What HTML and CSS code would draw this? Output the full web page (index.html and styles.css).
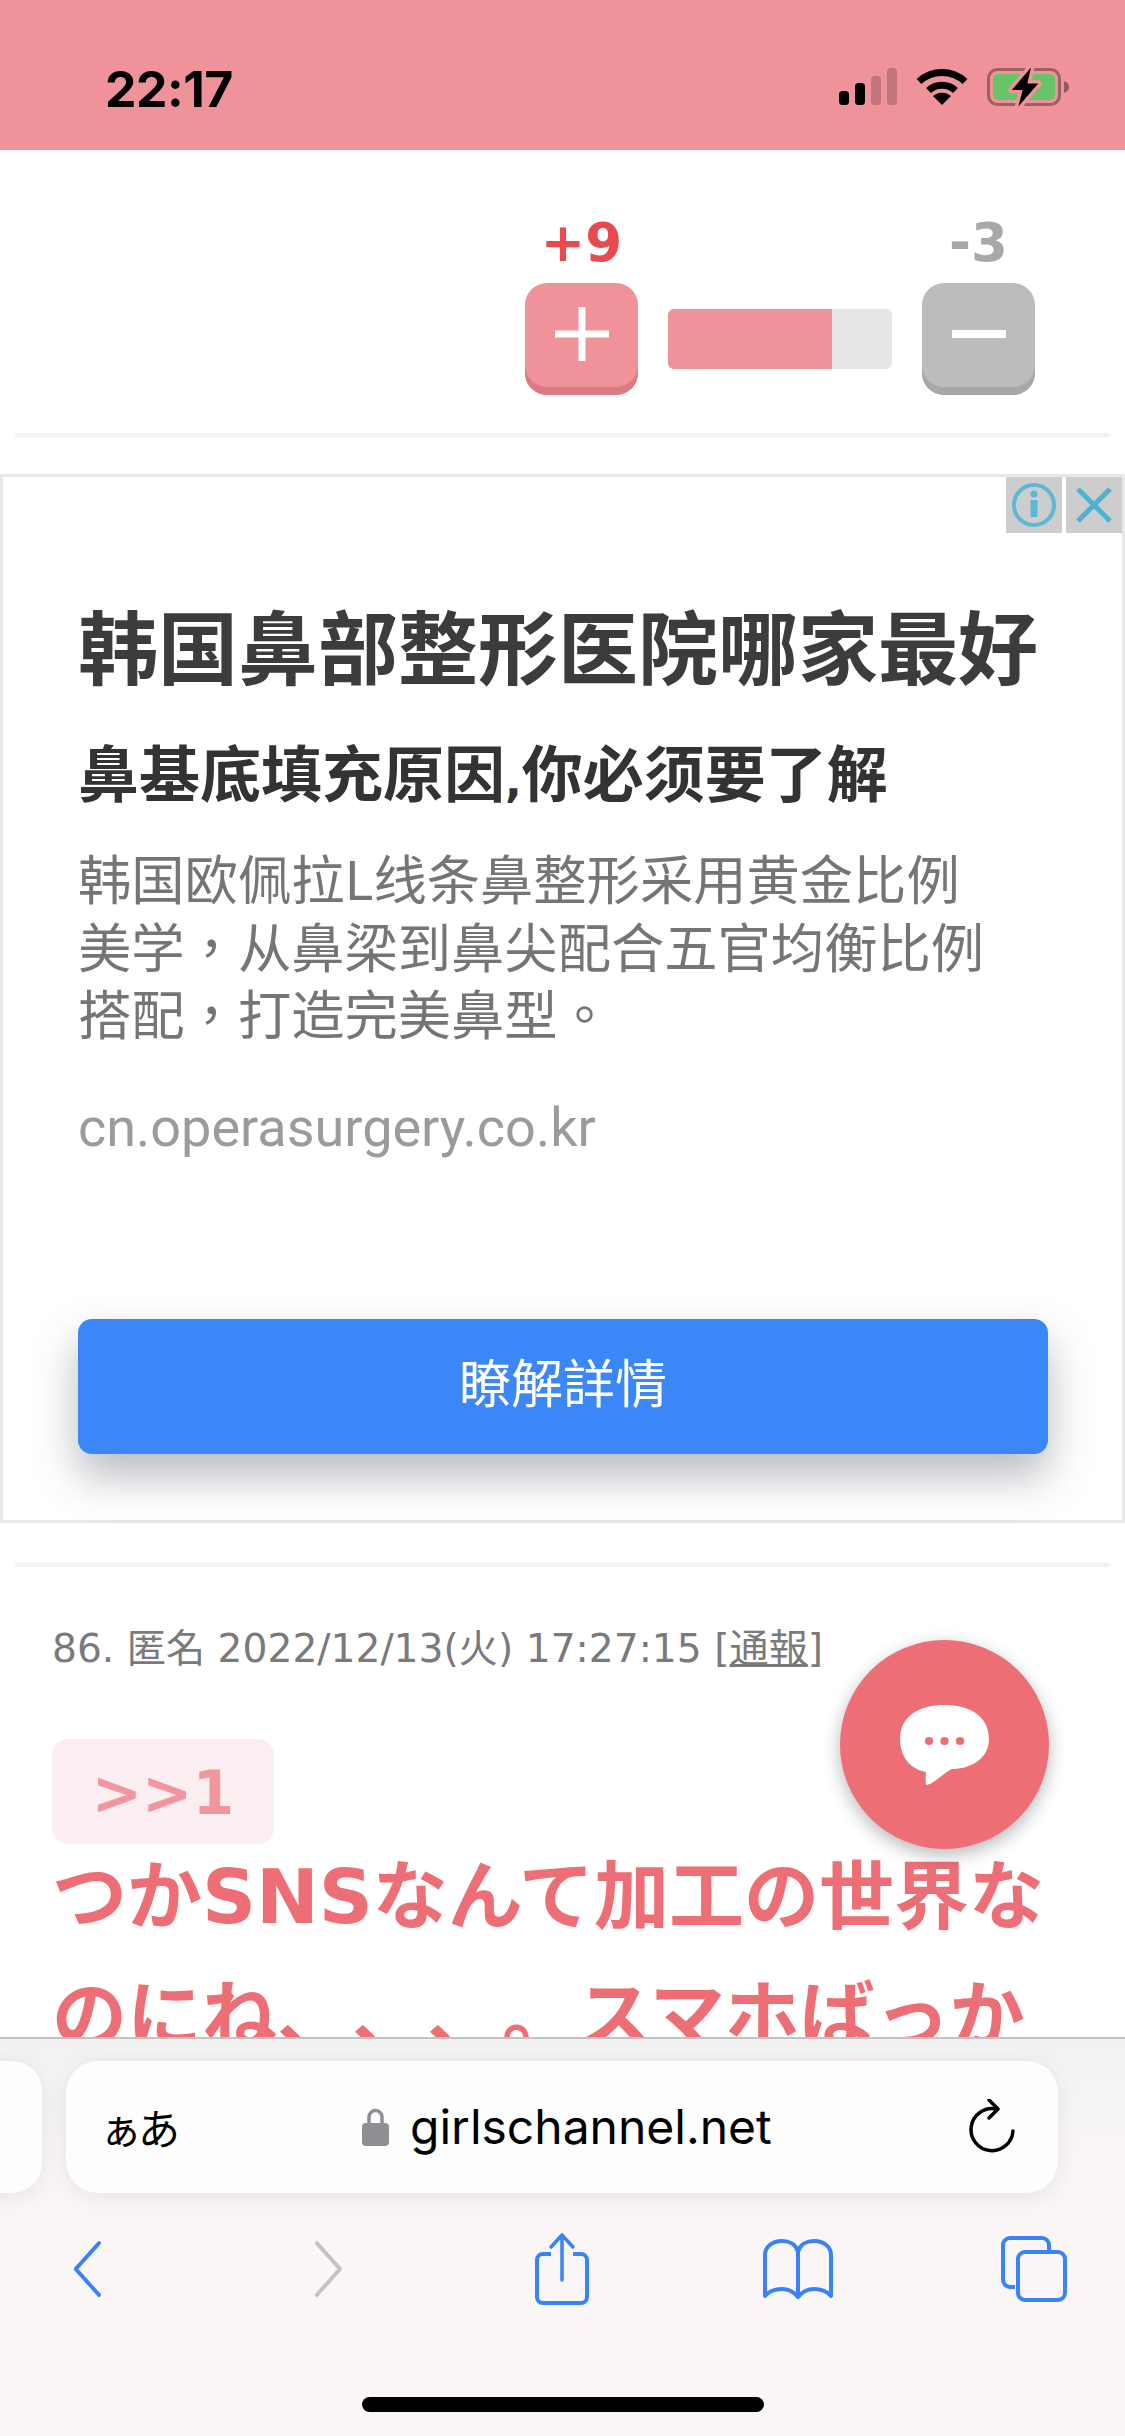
FILE: index.html
```html
<!DOCTYPE html>
<html lang="ja">
<head>
<meta charset="utf-8">
<title>girlschannel.net</title>
<link rel="stylesheet" href="styles.css">
</head>
<body>
<div class="screen">
  <header class="status">
    <span class="time">22:17</span>
    <div class="status-icons">
      <svg class="ico-signal" viewBox="0 0 58 37" width="58" height="37"><rect x="0" y="23" width="10" height="14" rx="3.5"/><rect x="16" y="15" width="10" height="22" rx="3.5"/><rect x="32" y="8" width="10" height="29" rx="3.5" opacity=".2"/><rect x="48" y="0" width="10" height="37" rx="3.5" opacity=".2"/></svg>
      <svg class="ico-wifi" viewBox="0 0 52 38" width="52" height="38"><path d="M3 13.5C16 1.5 36 1.5 49 13.5" fill="none" stroke="#000" stroke-width="7"/><path d="M12.500 22.500C20 15.500 32 15.500 39.500 22.500" fill="none" stroke="#000" stroke-width="7"/><path d="M17 28C22 23.500 30 23.500 35 28L26 37Z"/></svg>
      <svg class="ico-batt" viewBox="0 0 84 42" width="84" height="42"><rect x="1.500" y="3.500" width="71" height="35" rx="9" fill="none" stroke="#000" stroke-opacity=".35" stroke-width="3"/><path d="M77 15C80 16 82 18 82 21C82 24 80 26 77 27Z" fill="#000" fill-opacity=".4"/><rect x="6" y="8" width="62" height="26" rx="5" fill="#65c466"/><path d="M44 1.500L24.700 24H35.700L31.300 40.500L51.300 17.500H40.300Z" fill="#000" stroke="#f0929a" stroke-width="7" paint-order="stroke" stroke-linejoin="round"/></svg>
    </div>
  </header>

  <main class="page">
    <section class="vote">
      <div class="vote-col">
        <span class="count count-plus">+9</span>
        <button class="vbtn vbtn-plus" type="button"><svg viewBox="0 0 54 54" width="54" height="54"><path d="M27 0V54M0 27H54" stroke="#fff" stroke-width="7"/></svg></button>
      </div>
      <div class="meter"><div class="meter-fill"></div></div>
      <div class="vote-col">
        <span class="count count-minus">-3</span>
        <button class="vbtn vbtn-minus" type="button"><svg viewBox="0 0 54 54" width="54" height="54"><path d="M0 27H54" stroke="#fff" stroke-width="8"/></svg></button>
      </div>
    </section>
    <hr class="rule">

    <aside class="ad">
      <div class="ad-controls">
        <span class="ad-ctl"><svg viewBox="0 0 56 56" width="56" height="56"><circle cx="28" cy="28" r="20" fill="none" stroke="#5cb8d6" stroke-width="4"/><circle cx="28" cy="17" r="3.500" fill="#5cb8d6"/><rect x="24.500" y="23" width="7" height="17" fill="#5cb8d6"/></svg></span>
        <span class="ad-ctl"><svg viewBox="0 0 56 56" width="56" height="56"><path d="M12 12L44 44M44 12L12 44" stroke="#4db2d4" stroke-width="5"/></svg></span>
      </div>
      <h2 class="ad-title" lang="zh-Hans">韩国鼻部整形医院哪家最好</h2>
      <h3 class="ad-sub" lang="zh-Hans">鼻基底填充原因<span class="latin-comma">,</span>你必须要了解</h3>
      <p class="ad-desc" lang="zh-Hans">韩国欧佩拉L线条鼻整形采用黄金比例<br>美学<span class="punct" lang="zh-Hant">，</span>从鼻梁到鼻尖配合五官均衡比例<br>搭配<span class="punct" lang="zh-Hant">，</span>打造完美鼻型<span class="punct" lang="zh-Hant">。</span></p>
      <p class="ad-url">cn.operasurgery.co.kr</p>
      <a class="ad-btn" lang="zh-Hant">瞭解詳情</a>
    </aside>
    <hr class="rule rule-2">

    <article class="comment">
      <p class="meta">86. 匿名 2022/12/13(火) 17:27:15 [<u>通報</u>]</p>
      <span class="anchor">&gt;&gt;1</span>
      <p class="body-text">つかSNSなんて加工の世界なのにね、、、。スマホばっか</p>
    </article>
  </main>

  <button class="fab" type="button">
    <svg viewBox="0 0 90 84" width="93" height="84" preserveAspectRatio="none"><path d="M45 2C68 2 88 12 88 36C88 56 70 66 52 66C44 70 36 80 28 82C26 82 27 76 27 69C12 66 2 54 2 36C2 12 22 2 45 2Z" fill="#fff"/><circle cx="30" cy="38" r="4" fill="#ee6e75"/><circle cx="45" cy="38" r="4" fill="#ee6e75"/><circle cx="60" cy="38" r="4" fill="#ee6e75"/></svg>
  </button>

  <footer class="browser">
    <div class="url-row">
      <div class="tab-stub"></div>
      <div class="url-bar">
        <span class="aa">ぁあ</span>
        <div class="url-mid">
          <svg viewBox="0 0 27 38" width="27" height="38"><path d="M7 16V9a6.500 6.500 0 0 1 13 0V16" fill="none" stroke="#8e8e93" stroke-width="3.500"/><rect x="0" y="15" width="27" height="23" rx="4" fill="#8e8e93"/></svg>
          <span class="domain">girlschannel.net</span>
        </div>
        <svg class="reload" viewBox="0 0 46 56" width="46" height="56"><path d="M27 10A21 21 0 1 0 44 32" fill="none" stroke="#000" stroke-width="3.500" stroke-linecap="round"/><path d="M20 1L29 10L20 19" fill="none" stroke="#000" stroke-width="3.500" stroke-linecap="round" stroke-linejoin="round"/></svg>
      </div>
    </div>
    <nav class="tools">
      <svg viewBox="0 0 32 58" width="32" height="58"><path d="M29 3L3 29L29 55" transform="matrix(.9 0 0 1 3 0)" fill="none" stroke="#3a82f7" stroke-width="4" stroke-linecap="round" stroke-linejoin="round"/></svg>
      <svg viewBox="0 0 32 58" width="32" height="58"><path d="M3 3L29 29L3 55" transform="matrix(.9 0 0 1 0 0)" fill="none" stroke="#c4c2c3" stroke-width="4" stroke-linecap="round" stroke-linejoin="round"/></svg>
      <svg viewBox="0 0 56 74" width="56" height="74"><path d="M17 22H9a6 6 0 0 0-6 6V65a6 6 0 0 0 6 6H47a6 6 0 0 0 6-6V28a6 6 0 0 0-6-6H39" fill="none" stroke="#3a82f7" stroke-width="4"/><path d="M28 48V4M17 15L28 3L39 15" fill="none" stroke="#3a82f7" stroke-width="3.500" stroke-linecap="round"/></svg>
      <svg viewBox="0 0 72 60" width="72" height="60"><path d="M36 13C34 5 27 2 20 2C10 2 3 8 3 16V57C8 51 14 50 20 50C27 50 32 53 36 58C40 53 45 50 52 50C58 50 64 51 69 57V16C69 8 62 2 52 2C45 2 38 5 36 13ZM36 13V58" fill="none" stroke="#3a82f7" stroke-width="4" stroke-linejoin="round"/></svg>
      <svg viewBox="0 0 68 68" width="68" height="68"><path d="M15 52H10a7 7 0 0 1-7-7V10a7 7 0 0 1 7-7H42a7 7 0 0 1 7 7V16" fill="none" stroke="#3a82f7" stroke-width="4"/><rect x="18" y="17" width="47" height="48" rx="7" fill="none" stroke="#3a82f7" stroke-width="4"/></svg>
    </nav>
    <div class="home-bar"></div>
  </footer>
</div>
</body>
</html>
```
FILE: styles.css
```css
* { box-sizing: border-box; }
html, body { margin: 0; padding: 0; background: #fff; }
.screen {
  position: relative;
  width: 1125px;
  height: 2436px;
  overflow: hidden;
  font-family: "Noto Sans CJK JP", "Noto Sans", sans-serif;
  text-spacing-trim: space-all;
}
/* status bar */
.status {
  height: 150px;
  background: #f0929a;
  display: flex;
  justify-content: space-between;
  align-items: flex-start;
  padding: 59px 54px 0 105px;
}
.time {
  font: 700 50px/60px "Inter", "Liberation Sans", sans-serif;
  color: #000;
  letter-spacing: -0.5px;
}
.status-icons { display: flex; align-items: flex-start; gap: 19px; padding-top: 9px; }
.ico-batt { margin-top: -2px; }
/* vote */
.vote {
  display: flex;
  justify-content: flex-end;
  align-items: flex-end;
  gap: 30px;
  padding: 64px 90px 0 0;
}
.vote-col { display: flex; flex-direction: column; align-items: center; }
.count { font: 700 53px/57px "DejaVu Sans", sans-serif; margin-bottom: 12px; }
.count-plus { color: #ea4a4f; }
.count-minus { color: #a8a8a8; }
.vbtn {
  width: 113px;
  height: 112px;
  border: 0;
  border-radius: 22px;
  padding: 0 0 10px;
  display: flex;
  align-items: center;
  justify-content: center;
}
.vbtn-plus { background: #f0929a; box-shadow: inset 0 -8px 0 #db7a82; }
.vbtn-minus { background: #bcbcbc; box-shadow: inset 0 -8px 0 #a8a8a8; }
.meter {
  width: 224px;
  height: 60px;
  margin-bottom: 26px;
  background: #e6e6e6;
  border-radius: 6px;
  overflow: hidden;
}
.meter-fill { width: 73%; height: 100%; background: #f0929a; }
.rule {
  height: 4px;
  border: 0;
  margin: 38px 15px 0;
  background: #f2f2f2;
}
/* ad */
.ad {
  position: relative;
  height: 1049px;
  margin-top: 37px;
  border: 3px solid #e8e8e8;
  padding: 121px 0 66px 75px;
  display: flex;
  flex-direction: column;
}
.ad-controls { position: absolute; top: 0; right: 0; display: flex; gap: 4px; }
.ad-ctl { width: 56px; height: 56px; background: #cdcdcd; display: block; }
.ad-ctl svg { display: block; }
.ad-title {
  margin: 0;
  font: 700 80px/90px "Noto Sans CJK SC", sans-serif;
  color: #3c3c3c;
  white-space: nowrap;
}
.ad-sub {
  margin: 47px 0 0;
  font: 700 61px/72px "Noto Sans CJK SC", sans-serif;
  color: #333;
  white-space: nowrap;
}
.latin-comma { font-family: "DejaVu Sans", sans-serif; font-size: 44px; line-height: 1; }
.ad-desc {
  margin: 36px 0 0;
  font: 400 53.300px/67.500px "Noto Sans CJK SC", sans-serif;
  color: #757575;
}
.punct { font-family: "Noto Sans CJK TC", sans-serif; }
.ad-url {
  margin: 52px 0 0;
  font: 400 54px/60px "Roboto", sans-serif;
  color: #9b9b9b;
}
.ad-btn {
  display: block;
  flex: none;
  margin-top: auto;
  width: 970px;
  height: 135px;
  border-radius: 14px;
  background: #3b87f7;
  color: #fff;
  font: 400 52px/124px "Noto Sans CJK TC", sans-serif;
  text-align: center;
  box-shadow: 0 22px 44px rgba(60, 64, 80, .36);
}
.rule-2 { margin-top: 40px; }
/* comment */
.comment { padding: 55px 15px 0 52px; }
.meta {
  margin: 0;
  font: 400 39.200px/54px "DejaVu Sans", "Noto Sans CJK JP", sans-serif;
  color: #7a7a7a;
  white-space: nowrap;
}
.meta u { text-decoration: underline; }
.anchor {
  display: block;
  width: 222px;
  height: 105px;
  margin-top: 63px;
  border-radius: 16px;
  background: #fbeef0;
  color: #f2959c;
  font: 700 60px/108px "DejaVu Sans", sans-serif;
  text-align: center;
}
.body-text {
  margin: -7px 0 0;
  width: 1010px;
  font: 700 75px/120px "DejaVu Sans", "Noto Sans CJK JP", sans-serif;
  color: #ee6e75;
}
/* floating */
.fab {
  position: absolute;
  left: 840px;
  top: 1640px;
  width: 209px;
  height: 209px;
  border: 0;
  border-radius: 50%;
  padding: 0;
  background: #ee6e75;
  box-shadow: 0 6px 18px rgba(0, 0, 0, .28);
  display: flex;
  align-items: center;
  justify-content: center;
}
/* browser chrome */
.browser {
  position: absolute;
  left: 0;
  right: 0;
  bottom: 0;
  height: 399px;
  background: linear-gradient(#f2f1f1, #faf6f6 30%, #faf6f6);
  border-top: 2px solid #c2c2c2;
}
.url-row { position: relative; height: 132px; margin-top: 22px; }
.tab-stub {
  position: absolute;
  left: -40px;
  top: 0;
  width: 82px;
  height: 132px;
  background: #fdfdfd;
  border-radius: 30px;
  box-shadow: 0 4px 24px rgba(0, 0, 0, .08);
}
.url-bar {
  position: absolute;
  left: 66px;
  top: 0;
  width: 992px;
  height: 132px;
  background: #fdfdfd;
  border-radius: 32px;
  box-shadow: 0 4px 24px rgba(0, 0, 0, .08);
  display: flex;
  align-items: center;
  padding: 0 43px 0 34px;
}
.aa { font: 400 42px/50px "Noto Sans CJK JP", sans-serif; color: #000; width: 262px; letter-spacing: -4px; }
.url-mid { display: flex; align-items: center; gap: 21px; flex: 1; }
.domain { font: 400 48px/60px "Inter", "Liberation Sans", sans-serif; color: #000; }
.tools {
  display: grid;
  grid-template-columns: 172px 316px 148px 324px 148px;
  justify-items: center;
  align-items: center;
  height: 80px;
  margin-top: 36px;
}
.tools svg { display: block; }
.home-bar {
  position: absolute;
  left: 362px;
  bottom: 24px;
  width: 402px;
  height: 15px;
  border-radius: 8px;
  background: #000;
}
```
